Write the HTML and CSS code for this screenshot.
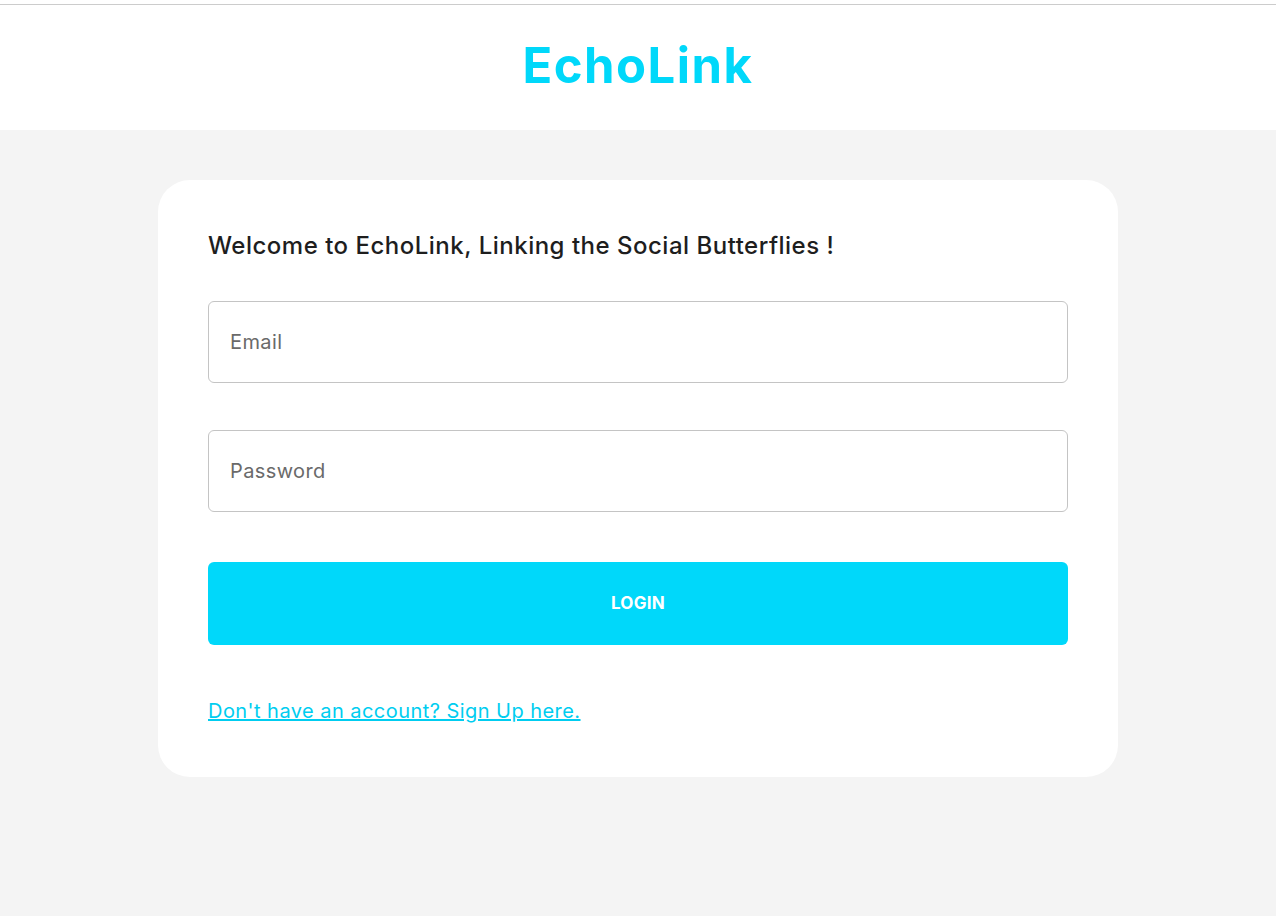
FILE: index.html
```html
<!DOCTYPE html>
<html>
<head>
<meta charset="utf-8">
<link rel="stylesheet" href="styles.css">
</head>
<body>
<header class="topbar">
  <div class="rule"></div>
  <h1 class="brand">EchoLink</h1>
</header>
<main class="page">
  <section class="card">
    <h2 class="welcome">Welcome to EchoLink, Linking the Social Butterflies !</h2>
    <form class="form">
      <input class="field" type="email" placeholder="Email">
      <input class="field" type="password" placeholder="Password">
      <button class="btn" type="button">LOGIN</button>
    </form>
    <a class="signup" href="#">Don't have an account? Sign Up here.</a>
  </section>
</main>
</body>
</html>
```
FILE: styles.css
```css
* { box-sizing: border-box; }
html, body { margin: 0; padding: 0; }
body {
  background: #f4f4f4;
  font-family: Inter, "Noto Sans", "Liberation Sans", sans-serif;
  min-height: 916px;
}
.topbar {
  background: #fff;
  height: 130px;
  padding-top: 4px;
  display: flex;
  flex-direction: column;
}
.rule { height: 1px; background: #cccccc; }
.brand {
  margin: 0;
  flex: 1;
  display: flex;
  align-items: center;
  justify-content: center;
  color: #00d8fa;
  font-size: 49px;
  font-weight: 700;
  letter-spacing: 1.5px;
  padding-bottom: 4px;
}
.page {
  display: flex;
  justify-content: center;
  padding-top: 50px;
}
.card {
  width: 960px;
  background: #fff;
  border-radius: 32px;
  padding: 50px 50px 53px;
}
.welcome {
  margin: 0 0 39px;
  font-size: 24px;
  font-weight: 500;
  color: #1e1e1e;
  line-height: 32px;
  letter-spacing: 0.5px;
}
.form {
  display: flex;
  flex-direction: column;
}
.field {
  height: 82px;
  border: 1px solid #c4c4c4;
  border-radius: 6px;
  padding: 0 21px;
  font-family: inherit;
  font-size: 20px;
  letter-spacing: 0.4px;
  color: #333;
  margin-bottom: 47px;
  outline: none;
}
.field::placeholder { color: #6a6a6a; }
.field + .field { margin-bottom: 50px; }
.btn {
  height: 83px;
  border: none;
  border-radius: 6px;
  background: #00d8fa;
  color: #fff;
  font-family: inherit;
  font-size: 17px;
  font-weight: 700;
  letter-spacing: 0.3px;
  padding-bottom: 3px;
  cursor: pointer;
}
.signup {
  display: inline-block;
  margin-top: 53px;
  font-size: 20px;
  line-height: 26px;
  letter-spacing: 0.45px;
  color: #00cdf0;
  text-decoration: underline;
}
```
